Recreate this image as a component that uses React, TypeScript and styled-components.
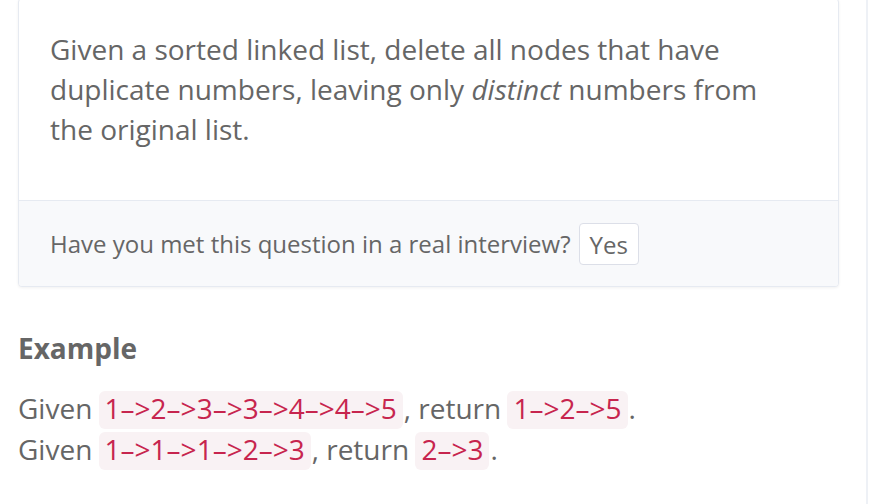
import React from "react";
import styled, { createGlobalStyle } from "styled-components";

const Global = createGlobalStyle`
  html, body { margin: 0; padding: 0; background: #fff; }
  body { font-family: "Open Sans", "Liberation Sans", sans-serif; color: #666; overflow: hidden; }
`;

const Page = styled.div`
  width: 876px;
  height: 504px;
  display: flex;
  overflow: hidden;
`;

const Column = styled.div`
  width: 868px;
  padding-left: 18px;
  border-right: 2px solid #eef1f6;
  box-sizing: border-box;
  flex: none;
`;

const Card = styled.div`
  width: 821px;
  margin-top: -2px;
  border: 1px solid #e6eaf1;
  border-radius: 4px;
  box-shadow: 0 1px 3px rgba(0, 0, 0, 0.06);
  background: #fff;
  box-sizing: border-box;
  overflow: hidden;
`;

const Description = styled.div`
  padding: 30px 50px 0 31px;
  font-size: 28px;
  line-height: 40px;
  color: #666;
  height: 201px;
  box-sizing: border-box;
  em { font-style: italic; }
`;

const Footer = styled.div`
  background: #f8f9fb;
  border-top: 1px solid #e6eaf1;
  height: 86px;
  box-sizing: border-box;
  padding: 0 31px;
  display: flex;
  align-items: center;
  gap: 8px;
  font-size: 24px;
  color: #666;
`;

const YesButton = styled.button`
  font-family: inherit;
  font-size: 24px;
  color: #666;
  background: #fff;
  border: 1px solid #dcdfe8;
  border-radius: 4px;
  height: 42px;
  padding: 0 10px;
  margin-top: 1px;
`;

const Heading = styled.h3`
  margin: 44px 0 0 0;
  font-size: 28px;
  font-weight: 700;
  color: #666;
  line-height: 34px;
`;

const Examples = styled.div`
  margin-top: 23px;
  font-size: 28px;
  line-height: 40px;
  color: #666;
`;

const Line = styled.div`
  white-space: nowrap;
`;

const Code = styled.code`
  display: inline-block;
  font-family: "Open Sans", "Liberation Sans", sans-serif;
  font-size: 28px;
  line-height: 34px;
  color: #c7254e;
  background: #f9f2f4;
  border-radius: 6px;
  padding: 0 6px 4px 6px;
  margin: 0 1px 0 -1px;
  vertical-align: baseline;
`;

export default function App() {
  return (
    <Page>
      <Global />
      <Column>
        <Card>
          <Description>
            Given a sorted linked list, delete all nodes that have duplicate
            numbers, leaving only <em>distinct</em> numbers from the original
            list.
          </Description>
          <Footer>
            <span>Have you met this question in a real interview?</span>
            <YesButton>Yes</YesButton>
          </Footer>
        </Card>
        <Heading>Example</Heading>
        <Examples>
          <Line>
            Given <Code>1–&gt;2–&gt;3–&gt;3–&gt;4–&gt;4–&gt;5</Code>, return{" "}
            <Code>1–&gt;2–&gt;5</Code>.
          </Line>
          <Line>
            Given <Code>1–&gt;1–&gt;1–&gt;2–&gt;3</Code>, return{" "}
            <Code>2–&gt;3</Code>.
          </Line>
        </Examples>
      </Column>
    </Page>
  );
}
